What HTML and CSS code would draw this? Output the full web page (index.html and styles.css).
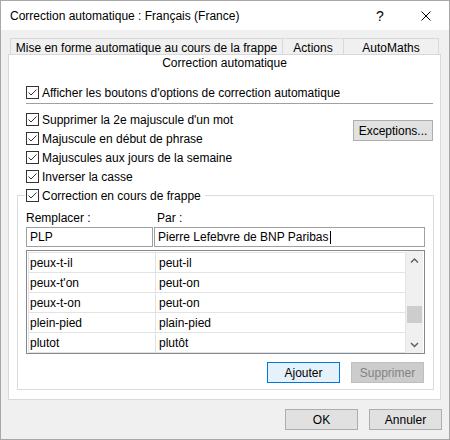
FILE: index.html
```html
<!DOCTYPE html>
<html lang="fr">
<head>
<meta charset="utf-8">
<title>Correction automatique</title>
<link rel="stylesheet" href="styles.css">
</head>
<body>
<div class="window">
  <div class="titlebar">
    <span class="title">Correction automatique : Français (France)</span>
    <span class="help">?</span>
    <span class="close"><svg width="10" height="10" viewBox="0 0 10 10"><path d="M0.5 0.5 L9.5 9.5 M9.5 0.5 L0.5 9.5" stroke="#000" stroke-width="1" fill="none"/></svg></span>
  </div>
  <div class="body">
    <div class="tabrow">
      <div class="tab t1">Mise en forme automatique au cours de la frappe</div>
      <div class="tab t2">Actions</div>
      <div class="tab t3">AutoMaths</div>
    </div>
    <div class="panel">
      <div class="panel-title">Correction automatique</div>
      <div class="cb first">
        <span class="box"><svg width="11" height="11" viewBox="0 0 11 11"><polyline points="1.5,5.5 4,8 9.5,2.5" fill="none" stroke="#333" stroke-width="1"/></svg></span>
        <span>Afficher les boutons d'options de correction automatique</span>
      </div>
      <div class="sep"></div>
      <div class="opts">
        <div class="checks">
          <div class="cb"><span class="box"><svg width="11" height="11" viewBox="0 0 11 11"><polyline points="1.5,5.5 4,8 9.5,2.5" fill="none" stroke="#333" stroke-width="1"/></svg></span><span>Supprimer la 2e majuscule d'un mot</span></div>
          <div class="cb"><span class="box"><svg width="11" height="11" viewBox="0 0 11 11"><polyline points="1.5,5.5 4,8 9.5,2.5" fill="none" stroke="#333" stroke-width="1"/></svg></span><span>Majuscule en début de phrase</span></div>
          <div class="cb"><span class="box"><svg width="11" height="11" viewBox="0 0 11 11"><polyline points="1.5,5.5 4,8 9.5,2.5" fill="none" stroke="#333" stroke-width="1"/></svg></span><span>Majuscules aux jours de la semaine</span></div>
          <div class="cb"><span class="box"><svg width="11" height="11" viewBox="0 0 11 11"><polyline points="1.5,5.5 4,8 9.5,2.5" fill="none" stroke="#333" stroke-width="1"/></svg></span><span>Inverser la casse</span></div>
        </div>
        <div class="btn exc">Exceptions...</div>
      </div>
      <fieldset class="group">
        <legend class="cb legend"><span class="box"><svg width="11" height="11" viewBox="0 0 11 11"><polyline points="1.5,5.5 4,8 9.5,2.5" fill="none" stroke="#333" stroke-width="1"/></svg></span><span>Correction en cours de frappe</span></legend>
        <div class="labels"><span class="lab1">Remplacer :</span><span>Par :</span></div>
        <div class="inputs">
          <div class="field f1">PLP</div>
          <div class="field f2">Pierre Lefebvre de BNP Paribas<span class="caret"></span></div>
        </div>
        <div class="list">
          <div class="grid">
            <div class="cell c1">peux-t-il</div><div class="cell c2">peut-il</div>
            <div class="cell c1">peux-t'on</div><div class="cell c2">peut-on</div>
            <div class="cell c1">peux-t-on</div><div class="cell c2">peut-on</div>
            <div class="cell c1">plein-pied</div><div class="cell c2">plain-pied</div>
            <div class="cell c1">plutot</div><div class="cell c2">plutôt</div>
          </div>
          <div class="scroll">
            <div class="sbtn"><svg width="17" height="17" viewBox="0 0 17 17"><polyline points="5,11.5 8.5,8 12,11.5" fill="none" stroke="#606060" stroke-width="1.5"/></svg></div>
            <div class="track"><div class="thumb"></div></div>
            <div class="sbtn"><svg width="17" height="17" viewBox="0 0 17 17"><polyline points="5,7 8.5,10.5 12,7" fill="none" stroke="#606060" stroke-width="1.5"/></svg></div>
          </div>
        </div>
        <div class="actions">
          <div class="btn default">Ajouter</div>
          <div class="btn disabled">Supprimer</div>
        </div>
      </fieldset>
    </div>
    <div class="footer">
      <div class="btn">OK</div>
      <div class="btn">Annuler</div>
    </div>
  </div>
</div>
</body>
</html>
```

FILE: styles.css
```css
* { box-sizing: border-box; }
html, body { margin: 0; padding: 0; }
body { width: 450px; height: 440px; overflow: hidden; background: #fff; }

.window {
  width: 450px;
  height: 440px;
  border: 1px solid #a8a8a8;
  background: #f0f0f0;
  font-family: "Liberation Sans", Arial, sans-serif;
  font-size: 12px;
  color: #000;
  display: flex;
  flex-direction: column;
}

.titlebar {
  height: 29px;
  flex: none;
  background: #fff;
  display: flex;
  align-items: center;
  padding-left: 9px;
}
.title { flex: 1; }
.help { width: 20px; text-align: center; font-size: 14px; margin-right: 13px; }
.close { width: 46px; height: 29px; display: flex; align-items: center; justify-content: center; }
.close svg { display: block; }

.body { flex: 1; padding: 8px 7px 0 7px; }

.tabrow { display: flex; height: 16px; margin-left: 2px; }
.tab {
  height: 16px;
  border: 1px solid #d9d9d9;
  border-bottom: none;
  background: #f0f0f0;
  padding-top: 2px;
  line-height: 14px;
  text-align: center;
  white-space: nowrap;
}
.t1 { width: 273px; }
.t2 { width: 62px; margin-left: -1px; }
.t3 { width: 96px; margin-left: -1px; }

.panel {
  width: 433px;
  height: 346px;
  border: 1px solid #d9d9d9;
  background: #fff;
  padding: 0 7px 0 17px;
}
.panel-title {
  height: 17px;
  line-height: 17px;
  text-align: center;
  margin: 0 -7px 0 -17px;
}

.cb { display: flex; align-items: center; height: 19px; gap: 3px; white-space: nowrap; }
.cb.first { margin-top: 11px; }
.box {
  width: 13px; height: 13px;
  border: 1px solid #333;
  background: #fff;
  flex: none;
  display: block;
}
.box svg { display: block; }

.sep { height: 1px; background: #a0a0a0; margin-top: 1px; }

.opts { margin-top: 6px; display: flex; justify-content: space-between; align-items: flex-start; }

.btn {
  width: 73px;
  height: 21px;
  border: 1px solid #adadad;
  background: #e1e1e1;
  display: flex;
  align-items: center;
  justify-content: center;
  white-space: nowrap;
}
.btn.exc { width: 80px; margin-top: 10px; }
.btn.default { background: #e5f1fb; border-color: #0078d7; }
.btn.disabled { background: #cccccc; border-color: #bfbfbf; color: #838383; }

.group {
  margin: 0 0 0 -9px;
  width: 417px;
  min-width: 0;
  border: 1px solid #dcdcdc;
  padding: 0 8px 6px 8px;
}
.legend { padding: 0 4px 0 1px; margin-left: -1px; background: #fff; }

.labels { display: flex; margin-top: 5px; height: 16px; line-height: 16px; }
.lab1 { width: 131px; }

.inputs { display: flex; margin-top: 1px; gap: 1px; }
.field {
  height: 20px;
  border: 1px solid #a0a0a0;
  padding-left: 3px;
  display: flex;
  align-items: center;
  white-space: nowrap;
}
.f1 { width: 127px; }
.f2 { width: 271px; }
.caret { display: inline-block; width: 1px; height: 13px; background: #000; margin-left: 1px; }

.list {
  margin-top: 3px;
  width: 399px;
  height: 104px;
  border: 1px solid #828790;
  padding: 0 1px;
  display: flex;
  background: #fff;
}
.grid {
  margin-top: 1px;
  display: grid;
  grid-template-columns: 127px 250px;
  grid-auto-rows: 20px;
  border-top: 1px solid #e3e3e3;
  border-left: 1px solid #e3e3e3;
  align-self: flex-start;
}
.cell {
  border-right: 1px solid #e3e3e3;
  border-bottom: 1px solid #e3e3e3;
  display: flex;
  align-items: center;
  white-space: nowrap;
}
.c1 { padding-left: 1px; }
.c2 { padding-left: 3px; }

.scroll { width: 17px; height: 102px; background: #f0f0f0; display: flex; flex-direction: column; }
.sbtn { height: 17px; flex: none; }
.sbtn svg { display: block; }
.track { flex: 1; }
.thumb { width: 15px; height: 17px; margin: 38px 0 0 1px; background: #cdcdcd; }

.actions { display: flex; justify-content: flex-end; gap: 11px; margin-top: 8px; padding-right: 1px; }

.footer { display: flex; justify-content: flex-end; gap: 11px; margin-top: 9px; }
```
